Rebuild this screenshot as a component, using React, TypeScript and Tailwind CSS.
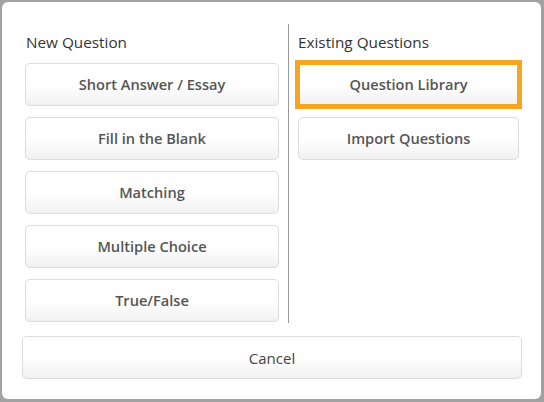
const btn =
  'flex items-center justify-center h-[43px] w-full pt-px border border-[#dcdcdc] bg-gradient-to-b from-white via-white to-[#f1f1f1] text-[14.6px] font-semibold text-[#555]'

function Btn({ label, active }: { label: string; active?: boolean }) {
  return (
    <button
      className={
        active
          ? btn + ' !border-2 !border-[#f6a623] outline-[3px] outline-solid outline-[#f6a623]'
          : btn + ' rounded-[5px]'
      }
    >
      {label}
    </button>
  )
}

export default function App() {
  const left = ['Short Answer / Essay', 'Fill in the Blank', 'Matching', 'Multiple Choice', 'True/False']
  return (
    <div
      className="w-[544px] h-[402px] bg-[#a2a2a2] pt-[2px] pl-[2px] pr-[3px] pb-[3px]"
      style={{ fontFamily: '"Open Sans", "Liberation Sans", sans-serif' }}
    >
      <div className="h-full bg-white rounded-[6px] pt-[22px]">
        <div className="flex ml-[23px] h-[299px]">
          <div className="w-[254px]">
            <div className="h-[39px] pt-[7px] pl-px text-[15.3px] leading-[22px] text-[#333]">New Question</div>
            <div className="flex flex-col gap-[11px]">
              {left.map(l => <Btn key={l} label={l} />)}
            </div>
          </div>
          <div className="w-px bg-[#999] mx-[9px]" />
          <div className="w-[221px]">
            <div className="h-[39px] pt-[7px] text-[15.3px] leading-[22px] text-[#333]">Existing Questions</div>
            <div className="flex flex-col gap-[11px]">
              <Btn label="Question Library" active />
              <Btn label="Import Questions" />
            </div>
          </div>
        </div>
        <div className="ml-[20px] mr-[19px] mt-[13px]">
          <button className="flex items-center justify-center h-[43px] w-full pt-px rounded-[5px] border border-[#dcdcdc] bg-gradient-to-b from-white via-white to-[#f1f1f1] text-[15px] text-[#444]">
            Cancel
          </button>
        </div>
      </div>
    </div>
  )
}
